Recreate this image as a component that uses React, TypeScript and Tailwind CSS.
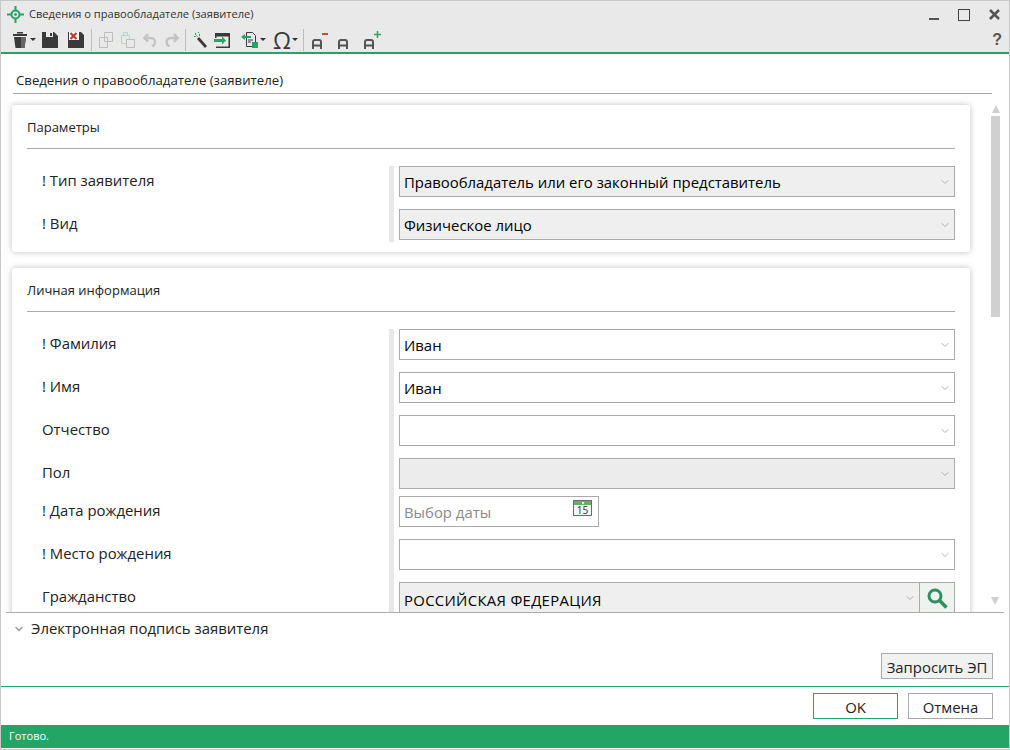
import { ChevronDown } from 'lucide-react'

const FONT = "font-['Open_Sans','Noto_Sans',sans-serif]"

function Caret({ className }: { className: string }) {
    return <span className={`${className} mt-[-2px] border-x-[3px] border-t-[3px] border-x-transparent border-t-[#333]`} />
}

function Sep({ className }: { className: string }) {
    return <span className={`${className} h-[22px] w-px bg-[#bdbdbd]`} />
}

function FontA({ className }: { className: string }) {
    return (
        <svg className={`${className} mt-[7px]`} width="10" height="10" viewBox="0 0 10 10" fill="none" stroke="#555" strokeWidth="2"><path d="M1 10V3a2 2 0 0 1 2-2h4a2 2 0 0 1 2 2v7M1 6.500h8" /></svg>
    )
}

function Toolbar() {
    return (
        <div className="flex h-[24px] shrink-0 items-center bg-[#e9e9e9] pl-[12px] pr-[7px]">
            {/* trash */}
            <svg width="14" height="16" viewBox="0 0 14 16" fill="#3a3a3a"><path d="M0 2h14v2H0zM4 0h6v1.500H4zM1 5h12l-1.500 11h-9z" /><path d="M8 5h5l-1.500 11H8z" fill="#666" /></svg>
            <Caret className="ml-[3px]" />
            {/* save */}
            <svg className="ml-[6px]" width="16" height="16" viewBox="0 0 16 16" fill="#3a3a3a"><path d="M0 0h12l4 4v12H0z" /><path d="M4 0h7v5H4z" fill="#e9e9e9" /><path d="M8 1h2v3H8z" /></svg>
            {/* save & close */}
            <svg className="ml-[10px]" width="16" height="16" viewBox="0 0 16 16"><path d="M0 0h13l3 3v13H0z" fill="#3a3a3a" /><path d="M1 0h10v8H1z" fill="#fff" /><path d="M2.500 1l6 6M8.500 1l-6 6" stroke="#c0392b" strokeWidth="2.200" /></svg>
            <Sep className="ml-[7px]" />
            {/* copy */}
            <svg className="ml-[7px]" width="14" height="16" viewBox="0 0 14 16" fill="none" stroke="#bdbdbd"><path d="M5.500.5h8v9h-8zM.5 5.500h8v10h-8z" fill="#e9e9e9" /></svg>
            {/* paste */}
            <svg className="ml-[8px]" width="14" height="16" viewBox="0 0 14 16" fill="none"><path d="M.5 3.500h8v8h-8zM2.500.5h4v3h-4z" stroke="#b4d8c4" /><path d="M5.500 7.500h8v8h-8z" fill="#e9e9e9" stroke="#bdbdbd" /></svg>
            {/* undo */}
            <svg className="ml-[8px]" width="14" height="14" viewBox="0 0 14 14" fill="none" stroke="#c3c3c3" strokeWidth="2.500"><path d="M5 1L1.500 5 5 8.500" /><path d="M2 5h6a4 4 0 0 1 4 4c0 2-1 3.500-3 4.500" /></svg>
            {/* redo */}
            <svg className="ml-[6px]" width="16" height="14" viewBox="0 0 16 14" fill="none" stroke="#c3c3c3" strokeWidth="2.500"><path d="M11 1l3.500 4L11 8.500" /><path d="M14 5H7.500a4 4 0 0 0-4 4c0 2 1 3.500 3 4.500" /></svg>
            <Sep className="ml-[6px]" />
            {/* wand */}
            <svg className="ml-[7px]" width="14" height="16" viewBox="0 0 14 16"><path d="M5 6l8 9" stroke="#3a3a3a" strokeWidth="2.800" /><path d="M2 1h1v2H2zM1 4h2v1H1zM6 2h1v2H6zM5 0h1v1H5z" fill="#22a565" /><path d="M3 3l2 2" stroke="#999" /></svg>
            {/* exit */}
            <svg className="ml-[7px]" width="16" height="15" viewBox="0 0 16 15"><path d="M1 0h15v15H2v-1.500h12.500v-10h-12V5H1z" fill="#3a3a3a" /><path d="M0 6h8V3.500l4 4-4 4V9H0z" fill="#22a565" /></svg>
            {/* import */}
            <svg className="ml-[11px]" width="17" height="16" viewBox="0 0 17 16"><path d="M5.500.5h6l3 3v11h-9z" fill="none" stroke="#3a3a3a" /><path d="M0 5l4-3v2h6v2H4v2z" fill="#22a565" /><path d="M7 8h5M7 10h3" stroke="#3a3a3a" /><path d="M11 10h6v6h-6z" fill="#22a565" /></svg>
            <Caret className="ml-[2px]" />
            {/* omega */}
            <span className="ml-[7px] w-[17px] text-center text-[23px] leading-none text-[#3a3a3a]">Ω</span>
            <Caret className="ml-[2px]" />
            <Sep className="ml-[5px]" />
            {/* font size */}
            <FontA className="ml-[8px]" />
            <svg className="mb-[12px]" width="6" height="2" viewBox="0 0 6 2"><path d="M0 1h6" stroke="#b5533c" strokeWidth="2" /></svg>
            <FontA className="ml-[10px]" />
            <FontA className="ml-[16px]" />
            <svg className="mb-[12px]" width="7" height="7" viewBox="0 0 7 7"><path d="M0 3.500h7M3.500 0v7" stroke="#2aa56c" strokeWidth="1.500" /></svg>
            <span className="ml-auto font-['Liberation_Sans',sans-serif] text-[16px] font-bold leading-none text-[#555]">?</span>
        </div>
    )
}

function Field({ value, bg, textClass }: { value?: string; bg?: string; textClass?: string }) {
    return (
        <div className={`flex h-[31px] items-center border border-[#ababab] pl-[4px] pr-[3px] ${bg ?? 'bg-white'}`}>
            <span className={`relative flex-1 text-[14.900px] text-black ${textClass ?? 'top-[1px]'}`}>{value}</span>
            <ChevronDown size={12} strokeWidth={1.500} className="text-[#9a9a9a]" />
        </div>
    )
}

function Row({ label, children, className }: { label: string; children: React.ReactNode; className: string }) {
    return (
        <div className={`flex ${className}`}>
            <div className="relative top-[-1px] w-[362px] pl-[15px] text-[14.900px] leading-[31px] text-[#222]">{label}</div>
            <div className="flex-1 border-l-[5px] border-[#e8e8e8] pl-[5px]">{children}</div>
        </div>
    )
}

function Card({ title, children, className }: { title: string; children: React.ReactNode; className: string }) {
    return (
        <div className={`rounded-[3px] bg-white px-[15px] shadow-[0_0_6px_rgba(0,0,0,0.25)] ${className}`}>
            <div className="flex h-[44px] items-center border-b border-[#ababab] pt-[2px] text-[13px] text-[#222]">{title}</div>
            {children}
        </div>
    )
}

export default function App() {
    return (
        <div className={`flex h-[750px] w-[1010px] flex-col overflow-hidden border border-[#c8c8c8] bg-white ${FONT}`}>
            {/* title bar */}
            <div className="flex h-[27px] shrink-0 items-center bg-[#e9e9e9] pl-[6px] pr-[9px]">
                <svg width="17" height="17" viewBox="0 0 17 17" fill="none" stroke="#22a565"><circle cx="8.500" cy="8.500" r="4" strokeWidth="2" /><path d="M8.500 0v4M8.500 13v4M0 8.500h4M13 8.500h4" strokeWidth="2" /><circle cx="8.500" cy="8.500" r="1" fill="#22a565" /></svg>
                <span className="ml-[5px] text-[11.100px] text-[#333]">Сведения о правообладателе (заявителе)</span>
                <span className="ml-auto mt-[8px] h-[2px] w-[10px] bg-[#555]" />
                <span className="ml-[19px] h-[12px] w-[12px] border border-[#444]" />
                <svg className="ml-[19px]" width="11" height="11" viewBox="0 0 11 11" stroke="#555" strokeWidth="2.500"><path d="M1 1l9 9M10 1l-9 9" /></svg>
            </div>
            <Toolbar />
            <div className="h-[2px] shrink-0 bg-[#22a565]" />

            <div className="ml-[12px] mr-[17px] flex h-[40px] shrink-0 items-center border-b border-[#ababab] pl-[3px] pt-[14px] text-[13.200px] text-[#222]">Сведения о правообладателе (заявителе)</div>

            {/* scrollable part */}
            <div className="relative h-[518px] shrink-0 overflow-hidden pl-[11px] pr-[39px] pt-[11px]">
                <Card title="Параметры" className="h-[147px]">
                    <div className="pt-[17px]">
                        <Row label="! Тип заявителя" className="h-[43px]"><Field value="Правообладатель или его законный представитель" bg="bg-[#efefef]" /></Row>
                        <Row label="! Вид" className="h-[33px]"><Field value="Физическое лицо" bg="bg-[#efefef]" /></Row>
                    </div>
                </Card>
                <Card title="Личная информация" className="mt-[16px] h-[400px]">
                    <div className="pt-[17px]">
                        <Row label="! Фамилия" className="h-[43px]"><Field value="Иван" /></Row>
                        <Row label="! Имя" className="h-[43px]"><Field value="Иван" /></Row>
                        <Row label="Отчество" className="h-[43px]"><Field /></Row>
                        <Row label="Пол" className="h-[38px]"><Field bg="bg-[#ececec]" /></Row>
                        <Row label="! Дата рождения" className="h-[43px]">
                            <div className="flex h-[31px] w-[200px] items-center justify-between border border-[#ababab] pl-[4px] pr-[6px]">
                                <span className="relative top-[1px] text-[14.900px] text-[#8a8a8a]">Выбор даты</span>
                                <svg className="mb-[8px]" width="19" height="16" viewBox="0 0 19 16"><path d="M0 0h19v16H0z" fill="#6a6a6a" /><path d="M1 1h17v4H1z" fill="#5cb85c" /><path d="M1 5h17v10H1z" fill="#f4f4f4" /><path d="M9 2h2v2H9z" fill="#fff" /><text x="9.500" y="14" textAnchor="middle" fontSize="10" fill="#333">15</text></svg>
                            </div>
                        </Row>
                        <Row label="! Место рождения" className="h-[43px]"><Field /></Row>
                        <Row label="Гражданство" className="h-[43px]">
                            <div className="flex">
                                <div className="flex-1"><Field value="РОССИЙСКАЯ ФЕДЕРАЦИЯ" bg="bg-[#efefef]" textClass="top-[3px] tracking-[0.3px]" /></div>
                                <div className="flex h-[31px] w-[35px] items-center justify-center border border-l-0 border-[#ababab] bg-[#eef3f0]">
                                    <svg width="22" height="22" viewBox="0 0 22 22" fill="none" stroke="#2f8f63"><circle cx="9" cy="9" r="6" strokeWidth="3" /><path d="M13.500 13.500l7 7" strokeWidth="3.500" /></svg>
                                </div>
                            </div>
                        </Row>
                    </div>
                </Card>
                {/* scrollbar */}
                <div className="absolute right-[9px] top-0 flex h-full w-[9px] flex-col items-center pt-[11px]">
                    <span className="border-x-[4px] border-b-[8px] border-x-transparent border-b-[#d0d0d0]" />
                    <span className="mt-[3px] h-[201px] w-[9px] bg-[#d0d0d0]" />
                </div>
                <span className="absolute right-[10px] top-[503px] border-x-[4px] border-t-[8px] border-x-transparent border-t-[#d0d0d0]" />
            </div>

            {/* expander */}
            <div className="mx-[5px] h-[41px] shrink-0 border-t border-[#ababab]">
                <div className="flex h-[31px] items-center pl-[7px] text-[14.900px] text-[#222]">
                    <ChevronDown size={12} strokeWidth={3} className="mr-[6px] text-[#9a9a9a]" />
                    Электронная подпись заявителя
                </div>
            </div>

            <div className="flex h-[33px] shrink-0 justify-end pr-[16px]">
                <button className="h-[26px] w-[112px] border border-[#ababab] bg-[#f0f2f0] pt-[2px] text-[14.900px] leading-none text-[#222]">Запросить ЭП</button>
            </div>

            <div className="flex h-[39px] shrink-0 justify-end gap-[10px] border-t border-[#22a565] pr-[16px] pt-[6px]">
                <button className="h-[26px] w-[85px] border border-[#22a565] bg-white pt-[2px] text-[14.900px] leading-none text-[#222]">OK</button>
                <button className="h-[26px] w-[85px] border border-[#ababab] bg-white pt-[2px] text-[14.900px] leading-none text-[#222]">Отмена</button>
            </div>

            <div className="flex h-[23px] shrink-0 items-center bg-[#22a565] pl-[8px] text-[11px] text-white">Готово.</div>
        </div>
    )
}
